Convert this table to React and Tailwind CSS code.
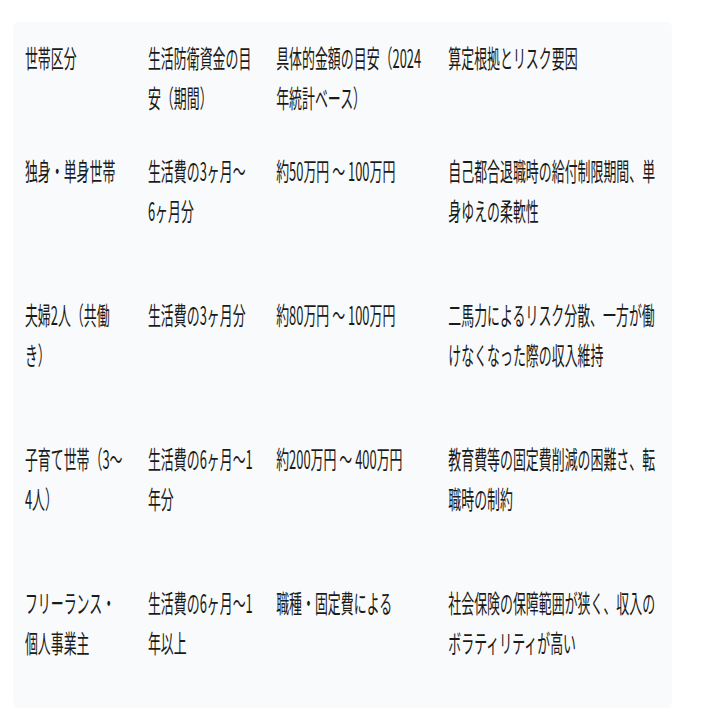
import React from 'react';

const rows = [
  ['独身・単身世帯', '生活費の3ヶ月～\n6ヶ月分', '約50万円 ～ 100万円', '自己都合退職時の給付制限期間、単\n身ゆえの柔軟性'],
  ['夫婦2人（共働\nき）', '生活費の3ヶ月分', '約80万円 ～ 100万円', '二馬力によるリスク分散、一方が働\nけなくなった際の収入維持'],
  ['子育て世帯（3～\n4人）', '生活費の6ヶ月～1\n年分', '約200万円 ～ 400万円', '教育費等の固定費削減の困難さ、転\n職時の制約'],
  ['フリーランス・\n個人事業主', '生活費の6ヶ月～1\n年以上', '職種・固定費による', '社会保険の保障範囲が狭く、収入の\nボラティリティが高い'],
];

const header = ['世帯区分', '生活防衛資金の目\n安（期間）', '具体的金額の目安（2024\n年統計ベース）', '算定根拠とリスク要因'];

const Row = ({ cells, head }) => (
  <div className={`grid grid-cols-[238px_248px_333px_1fr] ${head ? 'pt-[15px] pb-[15px]' : 'pt-[18px] pb-[46px]'}`}>
    {cells.map((c, i) => (
      <div key={i} className="whitespace-pre">{c}</div>
    ))}
  </div>
);

export default function App() {
  return (
    <div className="w-[708px] h-[708px] overflow-hidden bg-white pt-[22px] pl-[13px]">
      {/* 표 전체 - 가로로 눌린 화면 재현 */}
      <div
        className="w-[1275px] origin-top-left scale-x-[0.517] bg-[#f9fafb] rounded-[8px] pl-[23px] text-[25px] leading-[40px] text-[#1a1a1a]"
        style={{ fontFamily: '"Noto Sans CJK JP", "Noto Sans", sans-serif' }}
      >
        <Row cells={header} head />
        {rows.map((r, i) => (
          <Row key={i} cells={r} />
        ))}
      </div>
    </div>
  );
}
